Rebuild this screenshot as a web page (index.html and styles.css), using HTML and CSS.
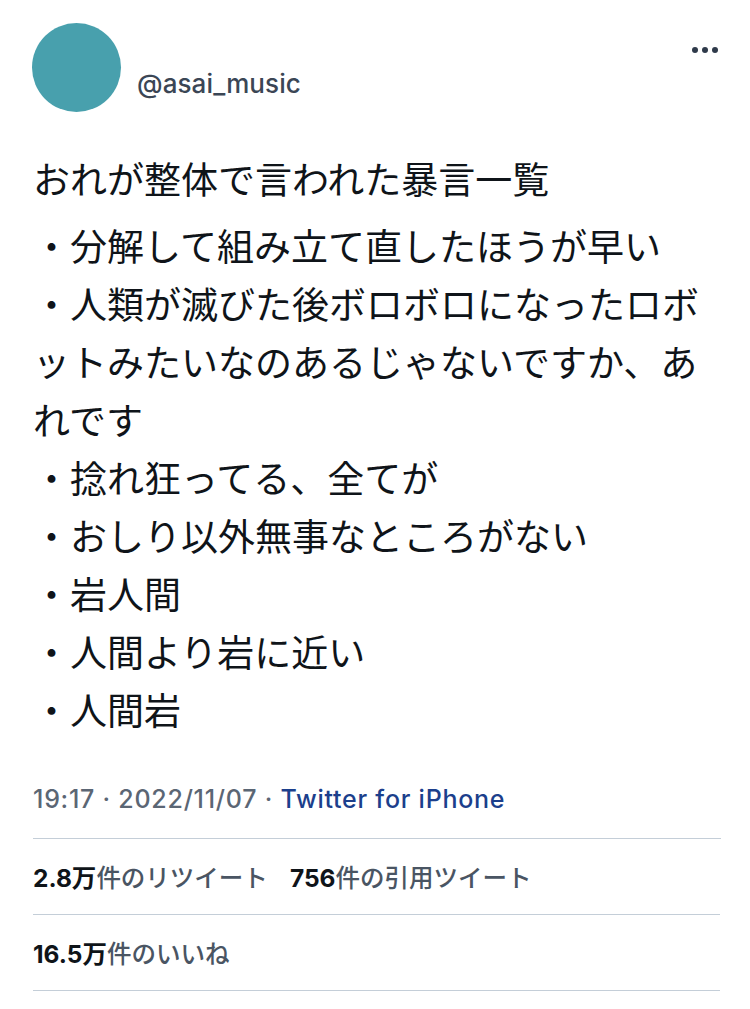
FILE: index.html
```html
<!DOCTYPE html>
<html lang="ja">

<head>
    <meta charset="UTF-8">
    <meta name="viewport" content="width=device-width, initial-scale=1.0">
    <title>@asai_music</title>
    <link rel="stylesheet" href="styles.css">
</head>

<body>
    <div class="tweet">
        <div class="header">
            <div class="avatar"></div>
            <div class="handle">@asai_music</div>
            <div class="more">
                <span></span><span></span><span></span>
            </div>
        </div>

        <p class="title">おれが整体で言われた暴言一覧</p>
        <div class="list">
            <p>・分解して組み立て直したほうが早い</p>
            <p>・人類が滅びた後ボロボロになったロボットみたいなのあるじゃないですか、あれです</p>
            <p>・捻れ狂ってる、全てが</p>
            <p>・おしり以外無事なところがない</p>
            <p>・岩人間</p>
            <p>・人間より岩に近い</p>
            <p>・人間岩</p>
        </div>

        <div class="meta">19:17 · 2022/11/07 · <span class="source">Twitter for iPhone</span></div>

        <div class="stats">
            <span class="stat"><b>2.8万</b>件のリツイート</span>
            <span class="stat"><b>756</b>件の引用ツイート</span>
        </div>
        <div class="stats">
            <span class="stat"><b>16.5万</b>件のいいね</span>
        </div>
    </div>
</body>

</html>
```

FILE: styles.css
```css
* {
    margin: 0;
    padding: 0;
    box-sizing: border-box;
}

body {
    background-color: #ffffff;
    color: #0f1419;
    font-family: "Noto Sans CJK JP", sans-serif;
}

.tweet {
    width: 750px;
    padding: 23px 30px 0 33px;
}

.header {
    display: flex;
    align-items: flex-start;
    height: 89px;
}

.avatar {
    width: 89px;
    height: 89px;
    border-radius: 50%;
    background-color: #48a0ad;
    margin-left: -1px;
}

.handle {
    margin: 46px 0 0 16px;
    font-family: "Inter", "Liberation Sans", sans-serif;
    font-size: 26px;
    font-weight: 500;
    letter-spacing: 0.1px;
    color: #3b4655;
    line-height: 30px;
}

.more {
    margin-left: auto;
    margin-top: 24px;
    margin-right: 2px;
    display: flex;
    gap: 4px;
}

.more span {
    width: 6px;
    height: 6px;
    border-radius: 50%;
    background-color: #2f3a4a;
}

.title {
    margin-top: 37px;
    font-size: 37px;
    line-height: 58px;
}

.list {
    margin-top: 9px;
    font-size: 37px;
    line-height: 58px;
    width: 690px;
}

.meta {
    margin-top: 46px;
    font-family: "Inter", "Liberation Sans", sans-serif;
    font-size: 25px;
    font-weight: 500;
    letter-spacing: 0.75px;
    line-height: 30px;
    color: #5b6674;
    padding-bottom: 24px;
    border-bottom: 1px solid #c4ced8;
    margin-right: -1px;
}

.source {
    color: #1c3f8c;
}

.stats {
    display: flex;
    gap: 22px;
    height: 76px;
    align-items: center;
    border-bottom: 1px solid #c4ced8;
    font-family: "Inter", "Liberation Sans", "Noto Sans CJK JP", sans-serif;
    font-size: 24.5px;
    font-weight: 500;
    color: #4a5563;
    padding-top: 0;
}

.stats b {
    color: #0f1419;
    font-weight: 700;
}
```
